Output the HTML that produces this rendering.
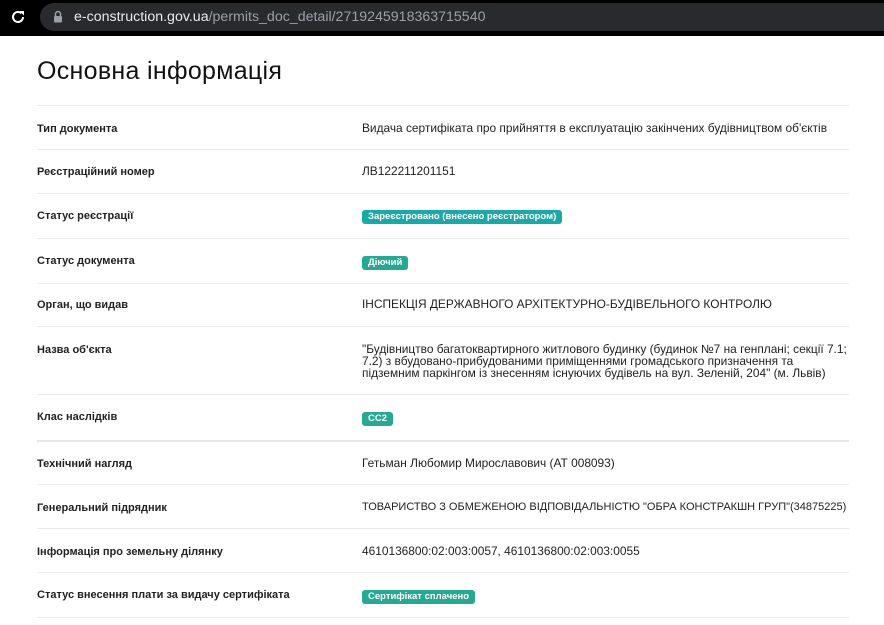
<!DOCTYPE html>
<html><head><meta charset="utf-8"><style>
*{margin:0;padding:0;box-sizing:border-box}
body{width:884px;height:625px;background:#fff;font-family:"Liberation Sans",Arial,sans-serif;position:relative;overflow:hidden;color:#1d1d1d}
.top{position:absolute;left:0;top:0;width:884px;height:36px;background:#000}
.pill{position:absolute;left:40px;top:3px;width:860px;height:28px;border-radius:14px;background:#282a2e}
.url{position:absolute;left:74px;top:9px;font-size:14.2px;color:#e8eaed}
.url span{color:#9aa0a6}
h1{position:absolute;left:37px;top:57px;font-size:25px;font-weight:normal;color:#111;letter-spacing:0.3px}
.line{position:absolute;left:37px;width:812px;height:1px;background:#e8eaed}
.lab{position:absolute;left:37px;font-size:11px;font-weight:bold;color:#222;margin-top:1px}
.val{position:absolute;left:362px;font-size:11.9px;color:#222;line-height:12px;white-space:nowrap}
.b{display:inline-block;color:#fff;font-weight:bold;font-size:9.5px;padding:2px 6px;border-radius:3px;line-height:10px}
</style></head><body>
<div class="top"><div class="pill"></div>
<svg style="position:absolute;left:10px;top:9px" width="16" height="16" viewBox="0 0 16 16"><path d="M13 8a5 5 0 1 1-1.5-3.6" fill="none" stroke="#fff" stroke-width="2"/><path d="M9.5 2h4.5v4.5z" fill="#fff"/></svg>
<svg style="position:absolute;left:53px;top:10px" width="10" height="13" viewBox="0 0 10 13"><path d="M2.5 6V4a2.5 2.5 0 0 1 5 0v2" fill="none" stroke="#9aa0a6" stroke-width="1.5"/><rect x="1" y="6" width="8" height="6.5" rx="1" fill="#9aa0a6"/></svg>
<div class="url">e-construction.gov.ua<span>/permits_doc_detail/2719245918363715540</span></div></div>
<h1>Основна інформація</h1>
<div class="line" style="top:105px"></div>
<div class="line" style="top:149px"></div>
<div class="line" style="top:193px"></div>
<div class="line" style="top:238px"></div>
<div class="line" style="top:283px"></div>
<div class="line" style="top:326px"></div>
<div class="line" style="top:394px"></div>
<div class="line" style="top:440px;height:2px;background:#e3e6ea"></div>
<div class="line" style="top:484px"></div>
<div class="line" style="top:528px"></div>
<div class="line" style="top:572px"></div>
<div class="line" style="top:617px"></div>

<div class="lab" style="top:122px">Тип документа</div>
<div class="val" style="top:122px">Видача сертифіката про прийняття в експлуатацію закінчених будівництвом об'єктів</div>
<div class="lab" style="top:165px">Реєстраційний номер</div>
<div class="val" style="top:165px">ЛВ122211201151</div>
<div class="lab" style="top:209px">Статус реєстрації</div>
<div class="val" style="top:209px"><span class="b" style="background:#1aa9a7">Зареєстровано (внесено реєстратором)</span></div>
<div class="lab" style="top:254px">Статус документа</div>
<div class="val" style="top:255px"><span class="b" style="background:#26a893">Діючий</span></div>
<div class="lab" style="top:298px">Орган, що видав</div>
<div class="val" style="top:298px">ІНСПЕКЦІЯ ДЕРЖАВНОГО АРХІТЕКТУРНО-БУДІВЕЛЬНОГО КОНТРОЛЮ</div>
<div class="lab" style="top:343px">Назва об'єкта</div>
<div class="val" style="top:343px">"Будівництво багатоквартирного житлового будинку (будинок №7 на генплані; секції 7.1;<br>7.2) з вбудовано-прибудованими приміщеннями громадського призначення та<br>підземним паркінгом із знесенням існуючих будівель на вул. Зеленій, 204" (м. Львів)</div>
<div class="lab" style="top:410px">Клас наслідків</div>
<div class="val" style="top:411px"><span class="b" style="background:#26a893">CC2</span></div>
<div class="lab" style="top:457px">Технічний нагляд</div>
<div class="val" style="top:457px">Гетьман Любомир Мирославович (АТ 008093)</div>
<div class="lab" style="top:501px">Генеральний підрядник</div>
<div class="val" style="top:501px;font-size:11px">ТОВАРИСТВО З ОБМЕЖЕНОЮ ВІДПОВІДАЛЬНІСТЮ "ОБРА КОНСТРАКШН ГРУП"(34875225)</div>
<div class="lab" style="top:545px">Інформація про земельну ділянку</div>
<div class="val" style="top:545px">4610136800:02:003:0057, 4610136800:02:003:0055</div>
<div class="lab" style="top:588px">Статус внесення плати за видачу сертифіката</div>
<div class="val" style="top:589px"><span class="b" style="background:#26a893">Сертифікат сплачено</span></div>
</body></html>
